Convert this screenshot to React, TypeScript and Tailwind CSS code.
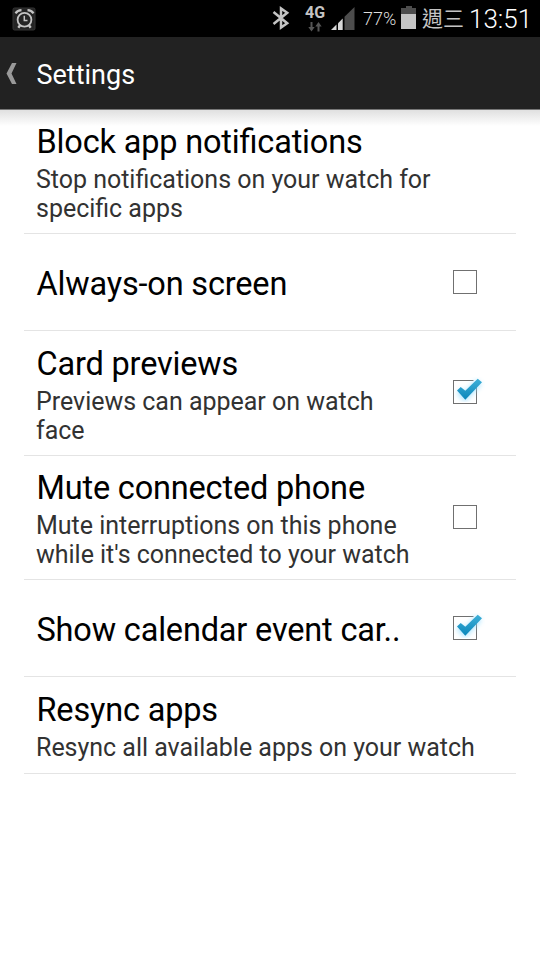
type Setting = {
  title: string;
  lines?: string[];
  height: string;
  checked?: boolean;
};

const settings: Setting[] = [
  {
    title: "Block app notifications",
    lines: ["Stop notifications on your watch for", "specific apps"],
    height: "h-[124px]",
  },
  { title: "Always-on screen", height: "h-[97px]", checked: false },
  {
    title: "Card previews",
    lines: ["Previews can appear on watch", "face"],
    height: "h-[125px]",
    checked: true,
  },
  {
    title: "Mute connected phone",
    lines: ["Mute interruptions on this phone", "while it's connected to your watch"],
    height: "h-[124px]",
    checked: false,
  },
  { title: "Show calendar event car..", height: "h-[97px]", checked: true },
  {
    title: "Resync apps",
    lines: ["Resync all available apps on your watch"],
    height: "h-[97px]",
  },
];

function AlarmIcon() {
  return (
    <svg width="24" height="24" viewBox="0 0 24 24" fill="none" className="ml-3 mt-[7px]">
      <rect x="1" y="1" width="22" height="22" rx="1.5" fill="#242424" stroke="#353535" />
      <circle cx="12.5" cy="12.8" r="6.9" stroke="#c4c4c4" strokeWidth="1.8" />
      <path d="M12.3 8.8v4.6h3.2" stroke="#c4c4c4" strokeWidth="1.5" />
      <path d="M3.5 6.3C4.8 4.4 6.8 3.3 9.5 3.2M21.5 6.3C20.2 4.4 18.2 3.3 15.5 3.2" stroke="#c4c4c4" strokeWidth="2.2" />
      <path d="M8.3 18L6.3 20.8M16.7 18L18.7 20.8" stroke="#c4c4c4" strokeWidth="2.4" />
    </svg>
  );
}

function BluetoothIcon() {
  return (
    <svg width="18" height="26" viewBox="0 0 18 26" fill="none" stroke="#c4c4c4" strokeWidth="2.5" className="mt-[5px]">
      <path d="M1.5 7L15.2 18.2L9 22.5V3.5L15.2 7.8L1.5 19" />
    </svg>
  );
}

function SignalIcon() {
  return (
    <svg width="24" height="24" viewBox="0 0 24 24" className="mt-[7px]">
      <path d="M0 23L5.5 17.5V23Z" fill="#d8d8d8" />
      <path d="M7 16.2L11.7 11.5V23H7Z" fill="#d8d8d8" />
      <path d="M13.5 9.7L23.5 0V23H13.5Z" fill="#4d4d4d" />
    </svg>
  );
}

function StatusBar() {
  return (
    <div className="flex h-[37px] items-start bg-black text-[#c4c4c4]">
      <AlarmIcon />
      <div className="ml-auto flex items-start pr-[9px]">
        <BluetoothIcon />
        <div className="ml-[14px] flex w-[22px] flex-col items-center">
          <span className="mt-[3px] text-base leading-[19px] font-bold">4G</span>
          <svg width="14" height="10" viewBox="0 0 14 10" fill="#555">
            <path d="M2.5 0h2v5h2.2L3.5 9.5L.3 5h2.2ZM9.5 9.5h2V4.5h2.2L10.5 0L7.3 4.5h2.2Z" />
          </svg>
        </div>
        <div className="ml-[5px]">
          <SignalIcon />
        </div>
        <span className="ml-2 w-[38px] text-lg leading-[38px] font-light whitespace-nowrap text-[#dcdcdc]">77%</span>
        <svg width="16" height="24" viewBox="0 0 16 24" className="mt-1.5">
          <path d="M5 0h6v2h4v6H0V2h5Z" fill="#4d4d4d" />
          <path d="M0 8h15v15H0Z" fill="#c4c4c4" />
        </svg>
        <span className="ml-[5px] w-[47px] text-[21px] leading-[38px] whitespace-nowrap">週三</span>
        <span className="w-[62px] text-[26px] leading-[38px] font-light whitespace-nowrap text-white">13:51</span>
      </div>
    </div>
  );
}

function Checkbox({ checked }: { checked: boolean }) {
  return (
    <svg width="40" height="40" viewBox="0 0 40 40" fill="none">
      <defs>
        <linearGradient id="tick" x1="0" y1="0" x2="0" y2="1">
          <stop offset="0" stopColor="#3fb0d8" />
          <stop offset="1" stopColor="#0a86ba" />
        </linearGradient>
        <filter id="glow" x="-30%" y="-30%" width="160%" height="160%">
          <feGaussianBlur stdDeviation="2.5" />
        </filter>
      </defs>
      <rect x="8.5" y="8.5" width="23" height="23" stroke="#707070" />
      {checked && (
        <>
          <path d="M28.5 8.5H31.5V15" stroke="#fff" strokeWidth="3" />
          <path d="M14 19L20 25L34 10" stroke="#8fdcff" strokeWidth="7" opacity=".7" filter="url(#glow)" />
          <path d="M12 18.5L15.7 15L20.3 18.8L32.7 6.8L37 10.3L20.3 27.8Z" fill="url(#tick)" />
        </>
      )}
    </svg>
  );
}

function SettingRow({ setting }: { setting: Setting }) {
  return (
    <li className={`mx-6 flex items-center border-b border-[#e4e4e4] ${setting.height}`}>
      <div className="w-0 flex-1 pt-[3px] pl-3 whitespace-nowrap">
        <h2 className="pl-[0.5px] text-[32.5px] leading-[38px] tracking-[-0.18px] text-black [font-feature-settings:'liga']">
          {setting.title}
        </h2>
        {setting.lines && (
          <div className="mt-1 text-[25px] leading-[29px] tracking-[-0.02px] text-[#323232] [font-feature-settings:'liga']">
            {setting.lines.map((line) => (
              <p key={line}>{line}</p>
            ))}
          </div>
        )}
      </div>
      {setting.checked !== undefined && (
        <div className={`mr-[31px] shrink-0 ${setting.lines ? "pb-0.5" : ""}`}>
          <Checkbox checked={setting.checked} />
        </div>
      )}
    </li>
  );
}

export default function App() {
  return (
    <div className="h-[960px] w-[540px] overflow-hidden bg-white font-['Roboto','Noto_Sans_CJK_TC',sans-serif]">
      <StatusBar />
      <header className="flex h-[73px] items-center border-b border-[#777] bg-[#222]">
        <svg width="12" height="22" viewBox="0 0 12 22" className="mt-0.5 ml-1.5">
          <path d="M6 0h4.5L5.5 10.5L10.5 21H6L.5 10.5Z" fill="#999" />
        </svg>
        <h1 className="ml-[18.5px] pt-1 text-[27px] leading-8 text-white">Settings</h1>
      </header>
      <main className="bg-linear-to-b from-[#e0e0e0] to-white to-[16px]">
        <ul>
          {settings.map((s) => (
            <SettingRow key={s.title} setting={s} />
          ))}
        </ul>
      </main>
    </div>
  );
}
